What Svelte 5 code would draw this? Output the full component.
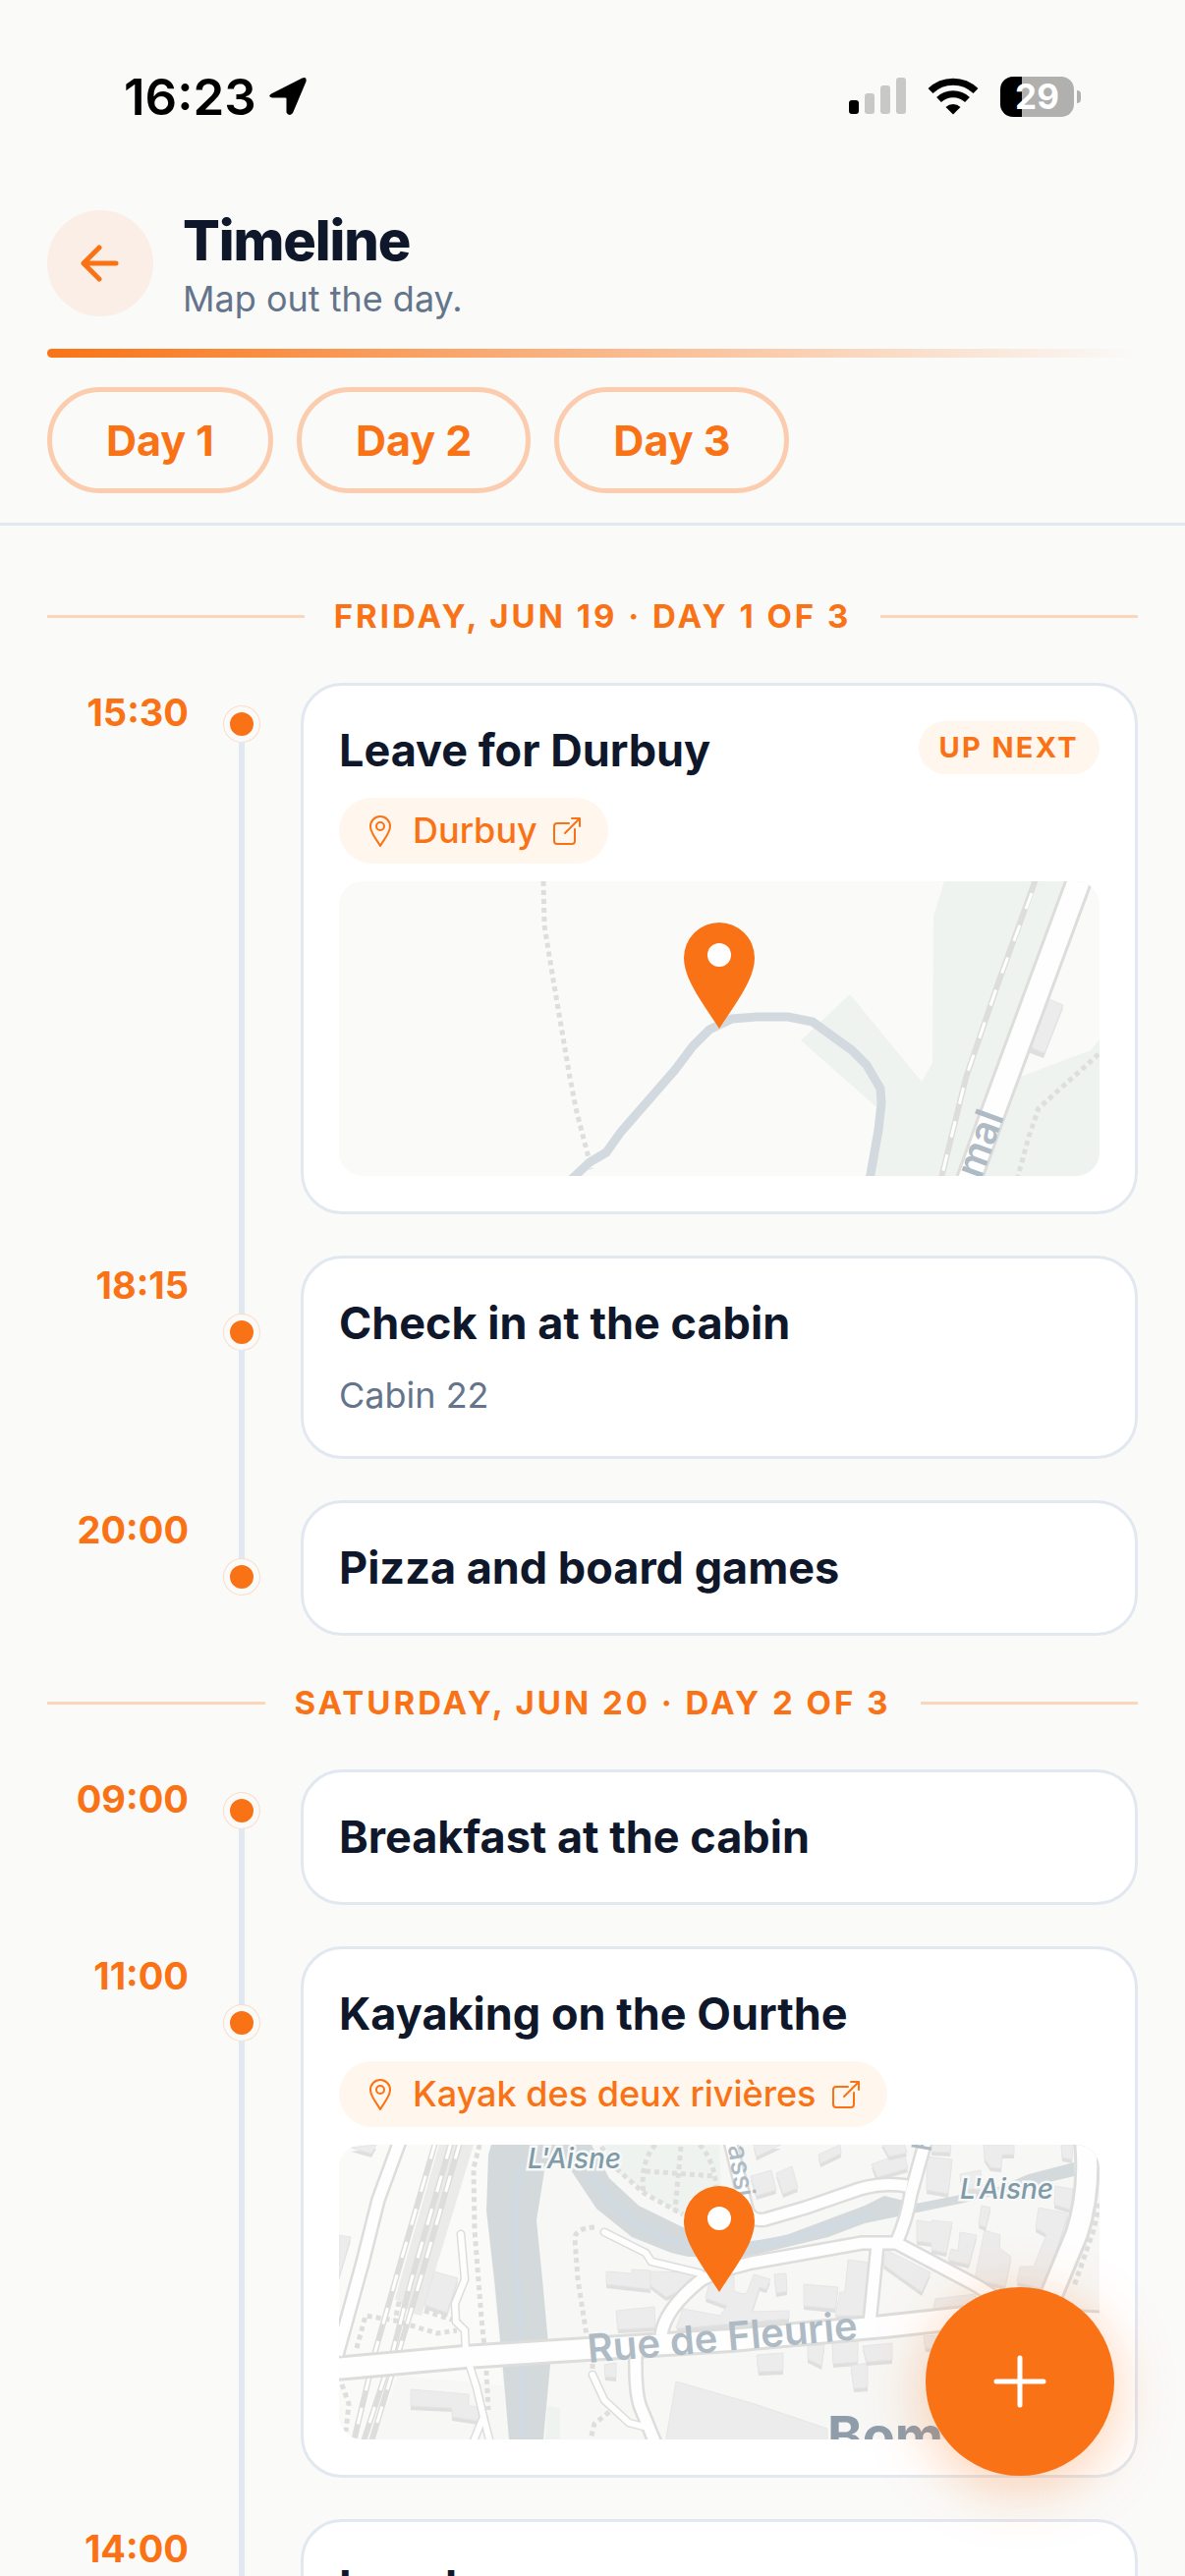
<script lang="ts">
  interface Stop {
    time: string
    title: string
    note?: string
    badge?: string
    place?: string
    map?: 'durbuy' | 'bomal'
  }

  interface Day {
    label: string
    stops: Stop[]
  }

  const days: Day[] = [
    {
      label: 'Friday, Jun 19 · Day 1 of 3',
      stops: [
        { time: '15:30', title: 'Leave for Durbuy', badge: 'Up next', place: 'Durbuy', map: 'durbuy' },
        { time: '18:15', title: 'Check in at the cabin', note: 'Cabin 22' },
        { time: '20:00', title: 'Pizza and board games' },
      ],
    },
    {
      label: 'Saturday, Jun 20 · Day 2 of 3',
      stops: [
        { time: '09:00', title: 'Breakfast at the cabin' },
        { time: '11:00', title: 'Kayaking on the Ourthe', place: 'Kayak des deux rivières', map: 'bomal' },
        { time: '14:00', title: 'Lunch' },
      ],
    },
  ]

  const buildings = [
    '12,3 38,0 33,9',
    '0,92 12,94 0,134',
    '97,129 121,136 110,171 87,163',
    '73,249 132,254 132,266 147,267 142,281 115,277 115,268 73,266',
    '272,129 298,131 298,127 317,128 317,147 272,142',
    '317,129 358,130 358,144 333,155 317,143',
    '282,169 321,165 322,186 284,188',
    '350,167 388,174 395,164 373,156 377,140 402,134 402,149 410,152 415,151 422,132 439,137 435,147 428,145 420,170 458,169 458,177 343,187',
    '443,132 455,131 456,149 445,151',
    '473,142 508,145 505,167 473,164',
    '518,117 540,120 535,174 505,174 510,150 515,150',
    '422,0 450,0 425,12',
    '488,10 510,0 511,9 490,19',
    '419,32 440,26 445,46 425,52',
    '445,29 461,22 467,44 452,50',
    '543,22 558,15 560,32 548,36',
    '425,214 452,212 452,230 427,231',
    '477,205 494,204 491,225 477,218',
    '502,202 528,200 528,221 503,223',
    '521,225 538,222 538,247 524,248',
    '533,205 563,202 563,219 537,221',
    '270,224 282,222 282,237 271,236',
    '343,241 423,264 497,289 497,310 331,310',
    '598,12 624,15 620,50 598,46',
    '603,0 623,0 622,8 603,7',
    '632,30 653,26 655,45 634,45',
    '656,0 687,0 687,10 675,10 674,24 663,23 657,14',
    '735,0 747,0 746,15 736,13',
    '729,42 747,45 745,66 728,61',
    '712,64 742,70 718,147 690,140 693,124 707,124 720,91 709,85',
    '588,77 603,79 603,77 624,79 618,110 603,107 603,100 588,98',
    '632,89 649,92 641,122 620,117 623,106 630,108',
    '657,87 673,92 672,105 684,114 678,144 647,137',
    '654,62 663,64 658,84 651,81',
    '542,20 575,8 579,24 548,33',
    '552,-2 575,-2 578,8 560,12',
    '557,107 602,130 593,150 554,122',
    '607,157 648,152 648,165 605,167',
    '595,195 615,194 615,207 597,207',
  ]

  const main_roads = [
    'M62 -4 L40 56 L24 120 L-2 214',
    'M398 -4 L415 66 Q420 79 434 76 L475 64 L530 45 Q555 38 578 42',
    'M597 -4 L582 50 Q578 76 567 100',
    'M328 194 Q331 168 368 138 Q385 128 420 120 L532 100 H567 L650 144 L700 176',
    'M548 102 L540 182',
    'M302 212 Q301 256 308 270 L322 304',
  ]

  const wide_roads = [
    'M-4 228 L128 216 L253 208 L398 199 L555 185 L655 174 L780 182',
    'M760 -4 Q765 46 751 90 L722 160',
  ]

  const lanes = [
    'M124 91 L128 137 L118 162 L119 180 L128 189 L129 212',
    'M132 222 L140 247 L147 277 L136 304',
    'M147 277 L154 304',
    'M270 89 L312 110 L318 119 L368 131',
    'M258 234 L270 260 L295 283 L310 287',
  ]

  const paths = [
    'M143 0 L137 24 L138 87 L145 177 L148 206',
    'M150 230 L152 270',
    'M18 207 L27 174 L57 179 L100 192 L120 189',
    'M87 169 L115 178',
    'M61 160 L57 179',
    'M3 244 L10 264 L7 292',
    'M260 84 Q240 85 240 96 L243 137 L252 194',
    'M258 228 V214',
    'M275 272 L260 284 L256 300',
    'M267 2 L282 24 L310 49 L350 71',
    'M322 0 Q306 18 310 49',
    'M367 0 Q382 16 384 44',
    'M348 2 L342 66',
    'M312 27 L383 32',
    'M774 60 L768 87 L748 144',
  ]

  const rails = [
    'M98 -2 L60 129 L37 210 L15 302',
    'M114 -2 L73 140 L55 210 L25 302',
    'M123 -2 L82 140 L61 210 L33 302',
  ]
</script>

{#snippet marker()}
  <path
    class="marker"
    d="M387 150 C371 125 351 100 351 78 A36 36 0 1 1 423 78 C423 100 403 125 387 150 Z"
  />
  <circle class="marker_hole" cx="387" cy="75" r="12" />
{/snippet}

{#snippet durbuy_map()}
  <svg class="map" viewBox="0 0 774 300" preserveAspectRatio="xMidYMid slice" role="img" aria-label="Map of Durbuy">
    <rect class="land" width="774" height="300" />
    <path
      class="green"
      d="M616 0 L605 36 L604 185 L593 204 L520 115 L470 162 L547 230 L541 300 H774 V161 L765 172 L693 199 L745 60 V0 Z"
    />
    <path class="path" d="M208 0 L209 45 L218 100 L235 200 L242 235 L257 293" />
    <path class="path" d="M773 176 L712 231 L702 260 L691 300" />
    <path
      class="stream"
      d="M236 304 L255 286 L272 276 L287 255 L342 192 L360 168 L377 151 L400 140 L425 138 H457 L482 143 L522 172 L537 187 L551 211 L552 226 L549 253 L540 304"
    />
    <path class="building_side" d="M723 123 L737 129 L717 180 L701 174 Z" />
    <path class="building" d="M723 120 L737 126 L718 175 L704 169 Z" />
    <path class="rail" d="M709 -2 L670 106 L638 200 L613 302" />
    <path class="rail_gap" d="M705 12 L670 106 L638 200 L613 302" />
    <path class="road_edge highway" d="M755 -6 L664 240 L641 304" />
    <path class="road_fill highway" d="M755 -6 L664 240 L641 304" />
    <text class="street" text-anchor="end" transform="translate(677 239) rotate(-70)">Bomal</text>
    {@render marker()}
  </svg>
{/snippet}

{#snippet bomal_map()}
  <svg class="map" viewBox="0 0 774 300" preserveAspectRatio="xMidYMid slice" role="img" aria-label="Map of Bomal">
    <rect class="town" width="774" height="300" />
    <path class="land" d="M0 0 H155 L150 67 L167 245 L60 235 L36 300 H0 Z" />
    <path class="yard" d="M102 0 H137 L84 174 L75 172 L57 157 Z" />
    <path class="green" d="M270 0 H387 L389 50 L348 71 L322 55 L282 27 Z" />
    <path class="green" d="M212 266 L225 268 V300 H210 Z" />
    <path
      class="water"
      d="M155 0 L152 10 L150 67 L158 137 L167 230 L173 300 H208 L215 224 L207 137 L201 77 L209 27 L215 17 L232 20 L262 65 L298 94 L338 110 L355 114 H415 L498 94 L535 80 L632 60 L748 32 V18 L702 30 L668 44 L587 60 L555 52 L535 62 L455 92 L415 100 L352 85 L305 62 L275 34 L257 0 Z"
    />
    <path class="current" d="M186 20 Q172 70 184 170 L188 300 M258 30 Q290 90 360 102 Q430 112 540 70" />
    {#each buildings as points}
      <polygon class="building_side" {points} transform="translate(0 4)" />
      <polygon class="building" {points} />
    {/each}
    {#each paths as d}
      <path class="path" {d} />
    {/each}
    {#each rails as d}
      <path class="rail" {d} />
      <path class="rail_gap" {d} />
    {/each}
    {#each lanes as d}
      <path class="road_edge lane" {d} />
    {/each}
    {#each main_roads as d}
      <path class="road_edge" {d} />
    {/each}
    {#each wide_roads as d}
      <path class="road_edge broad" {d} />
    {/each}
    {#each lanes as d}
      <path class="road_fill lane" {d} />
    {/each}
    {#each main_roads as d}
      <path class="road_fill" {d} />
    {/each}
    {#each wide_roads as d}
      <path class="road_fill broad" {d} />
    {/each}
    <text class="river_name" x="192" y="24">L'Aisne</text>
    <text class="river_name" x="632" y="55">L'Aisne</text>
    <text class="street small" text-anchor="end" transform="translate(404 54) rotate(81)">Rue du Bassi</text>
    <text class="street small" transform="translate(602 8) rotate(-80)">F</text>
    <text class="street" transform="translate(254 222) rotate(-5)">Rue de Fleurie</text>
    <text class="town_name" x="497" y="315">Bomal</text>
    {@render marker()}
  </svg>
{/snippet}

<div class="app">
  <div class="status_bar">
    <div class="status_group clock">
      <span>16:23</span>
      <svg width="40" height="40" viewBox="0 0 40 40" aria-hidden="true">
        <path d="M3 17.500 L34.500 1.500 Q39.500 -0.500 38.500 5 L25 37 Q21 41 18.500 36.500 V22.500 Q18.500 21.500 17.500 21.500 L4 21.500 Q-1 20.500 3 17.500 Z" />
      </svg>
    </div>

    <div class="status_group">
      <svg width="58" height="38" viewBox="0 0 58 38" aria-hidden="true">
        <rect x="0" y="23" width="10" height="14" rx="3" />
        <g class="signal_off">
          <rect x="16" y="16" width="10" height="21" rx="3" />
          <rect x="32" y="8" width="10" height="29" rx="3" />
          <rect x="48" y="0" width="10" height="37" rx="3" />
        </g>
      </svg>
      <svg class="wifi" width="52" height="38" viewBox="0 0 52 38" aria-hidden="true">
        <path class="wifi_arc" d="M3 13.500 A33 33 0 0 1 49 13.500" />
        <path class="wifi_arc" d="M11.500 22.500 A21 21 0 0 1 40.500 22.500" />
        <path d="M26 37.500 L18.500 30 A11 11 0 0 1 33.500 30 Z" />
      </svg>
      <div class="battery">
        <span class="battery_level">29</span>
        <span class="battery_nub"></span>
      </div>
    </div>
  </div>

  <header class="header">
    <div class="heading">
      <button class="back" aria-label="Back">
        <svg width="40" height="40" viewBox="0 0 40 40" aria-hidden="true">
          <path d="M36 20 H4 M19 4 L3 20 L19 36" />
        </svg>
      </button>
      <div>
        <h1>Timeline</h1>
        <p>Map out the day.</p>
      </div>
    </div>

    <div class="accent" role="presentation"></div>

    <nav class="day_tabs" aria-label="Days">
      {#each [1, 2, 3] as day}
        <button class="day_tab">Day {day}</button>
      {/each}
    </nav>
  </header>

  <main class="timeline">
    {#each days as day}
      <section>
        <h2 class="day_label">{day.label}</h2>

        {#each day.stops as stop, index}
          <article class="stop">
            <time>{stop.time}</time>

            <div class="rail_column" class:first={index === 0} role="presentation">
              <span class="connector lead"></span>
              <span class="dot"></span>
              {#if index < day.stops.length - 1}
                <span class="connector"></span>
              {/if}
            </div>

            <div class="card">
              <div class="card_header">
                <h3>{stop.title}</h3>
                {#if stop.badge}
                  <span class="badge">{stop.badge}</span>
                {/if}
              </div>

              {#if stop.note}
                <p class="note">{stop.note}</p>
              {/if}

              {#if stop.place}
                <a class="place" href="#{stop.map}">
                  <svg width="36" height="36" viewBox="0 0 36 36" aria-hidden="true">
                    <path d="M18 33 C14 26 8 20 8 13 A10 10 0 0 1 28 13 C28 20 22 26 18 33 Z" />
                    <circle cx="18" cy="13" r="4" />
                  </svg>
                  <span>{stop.place}</span>
                  <svg width="30" height="30" viewBox="0 0 30 30" aria-hidden="true">
                    <path d="M17 7 H5 Q2 7 2 10 V25 Q2 28 5 28 H20 Q23 28 23 25 V13 M13 17 L28 2 M20 2 H28 V10" />
                  </svg>
                </a>
              {/if}

              {#if stop.map === 'durbuy'}
                {@render durbuy_map()}
              {:else if stop.map === 'bomal'}
                {@render bomal_map()}
              {/if}
            </div>
          </article>
        {/each}
      </section>
    {/each}
  </main>

  <button class="add" aria-label="Add stop">
    <svg width="54" height="54" viewBox="0 0 54 54" aria-hidden="true">
      <path d="M27 3 V51 M3 27 H51" />
    </svg>
  </button>
</div>

<style>
  :global(body) {
    background: #fafaf9;
  }

  .app {
    --orange: #f97316;
    --ink: #0f172a;
    --muted: #64748b;
    --line: #e2e8f0;
    --page: #fafaf9;
    --tint: #fff6ed;

    display: flex;
    position: relative;
    flex-direction: column;
    height: 100vh;
    overflow: hidden;
    background: var(--page);
    color: var(--ink);
    font-family: Inter, 'Liberation Sans', sans-serif;
  }

  h1,
  h2,
  h3,
  p {
    margin: 0;
  }

  button {
    border: 0;
    padding: 0;
    font: inherit;
    cursor: pointer;
  }

  .status_bar {
    display: flex;
    flex: none;
    align-items: center;
    justify-content: space-between;
    padding: 0 106px 0 126px;
    height: 196px;
    color: #000;
  }

  .status_group {
    display: flex;
    align-items: center;
    gap: 22px;
  }

  .clock {
    gap: 12px;
    font-size: 51px;
    font-weight: 600;
  }

  .signal_off {
    fill: #c8c8c7;
  }

  .wifi_arc {
    fill: none;
    stroke: #000;
    stroke-width: 7;
  }

  .battery {
    display: flex;
    align-items: center;
    gap: 3px;
  }

  .battery_level {
    border-radius: 13px;
    width: 75px;
    background: linear-gradient(90deg, #000 29%, #b0b0af 29%);
    color: #fff;
    font-size: 35px;
    font-weight: 700;
    line-height: 41px;
    text-align: center;
  }

  .battery_nub {
    border-radius: 0 6px 6px 0;
    width: 4px;
    height: 13px;
    background: #b0b0af;
  }

  .header {
    flex: none;
    border-bottom: 3px solid var(--line);
    padding: 18px 48px 30px;
  }

  .heading {
    display: flex;
    align-items: flex-start;
    gap: 30px;
  }

  .back {
    display: grid;
    flex: none;
    place-items: center;
    border-radius: 50%;
    width: 108px;
    height: 108px;
    background: #faeee6;
  }

  .back path,
  .add path {
    fill: none;
    stroke: var(--orange);
    stroke-width: 5;
    stroke-linecap: round;
    stroke-linejoin: round;
  }

  h1 {
    font-size: 56px;
    font-weight: 800;
    letter-spacing: -0.02em;
    line-height: 62px;
  }

  .heading p {
    margin-top: 4px;
    color: var(--muted);
    font-size: 36px;
    line-height: 48px;
  }

  .accent {
    margin-top: 27px;
    border-radius: 5px;
    height: 9px;
    background: linear-gradient(90deg, var(--orange), rgb(249 115 22 / 0));
  }

  .day_tabs {
    display: flex;
    gap: 24px;
    margin-top: 30px;
  }

  .day_tab {
    border: 5px solid #fbcdae;
    border-radius: 54px;
    padding: 0 55px;
    height: 108px;
    background: transparent;
    color: var(--orange);
    font-size: 43px;
    font-weight: 700;
  }

  .timeline {
    flex: 1;
    padding: 24px 48px 0;
    min-height: 0;
    overflow-y: auto;
    scrollbar-width: none;
  }

  .day_label {
    display: flex;
    align-items: center;
    gap: 30px;
    padding: 48px 0;
    color: var(--orange);
    font-size: 33px;
    font-weight: 700;
    letter-spacing: 3px;
    line-height: 40px;
    text-transform: uppercase;
    white-space: nowrap;
  }

  .day_label::before,
  .day_label::after {
    content: '';
    flex: 1;
    height: 3px;
    background: #fcd5bb;
  }

  .stop {
    display: grid;
    grid-template-columns: 144px 114px 1fr;
  }

  time {
    padding-top: 6px;
    color: var(--orange);
    font-size: 38px;
    font-weight: 700;
    line-height: 48px;
    text-align: right;
  }

  .rail_column {
    display: flex;
    flex-direction: column;
    align-items: center;
    padding-right: 6px;
  }

  .connector {
    flex: 1;
    width: 6px;
    background: var(--line);
  }

  .connector.lead {
    flex: none;
    height: 60px;
  }

  .first .connector.lead {
    height: 24px;
    background: transparent;
  }

  .dot {
    box-sizing: border-box;
    flex: none;
    border: 6px solid var(--page);
    border-radius: 50%;
    width: 36px;
    height: 36px;
    background: var(--orange);
    box-shadow: 0 0 0 1px #fbdcc8;
  }

  .card {
    display: flex;
    flex-direction: column;
    align-items: flex-start;
    gap: 18px;
    border: 3px solid var(--line);
    border-radius: 42px;
    padding: 36px;
    min-width: 0;
    background: #fff;
  }

  .stop:not(:last-child) .card {
    margin-bottom: 42px;
  }

  .card_header {
    display: flex;
    align-items: flex-start;
    justify-content: space-between;
    width: 100%;
  }

  h3 {
    font-size: 45px;
    font-weight: 700;
    line-height: 60px;
  }

  .badge {
    border-radius: 27px;
    padding: 0 21px;
    background: var(--tint);
    color: var(--orange);
    font-size: 29px;
    font-weight: 700;
    letter-spacing: 0.08em;
    line-height: 54px;
    text-transform: uppercase;
  }

  .note {
    color: var(--muted);
    font-size: 36px;
    line-height: 51px;
  }

  .place {
    display: flex;
    align-items: center;
    gap: 15px;
    border-radius: 34px;
    padding: 8px 27px 8px 24px;
    background: var(--tint);
    color: var(--orange);
    font-size: 36px;
    font-weight: 500;
    line-height: 51px;
    text-decoration: none;
  }

  .place path,
  .place circle {
    fill: none;
    stroke: var(--orange);
    stroke-width: 2;
    stroke-linecap: round;
    stroke-linejoin: round;
  }

  .map {
    display: block;
    border-radius: 24px;
    width: 100%;
    height: 300px;
  }

  .land {
    fill: #fafaf8;
  }

  .town {
    fill: #f7f7f5;
  }

  .yard {
    fill: #ebebea;
  }

  .green {
    fill: #eef3ef;
  }

  .water {
    fill: #d4dadc;
  }

  .current {
    fill: none;
    stroke: #d1dae0;
    stroke-width: 8;
  }

  .stream {
    fill: none;
    stroke: #d2dadf;
    stroke-width: 9;
  }

  .building {
    fill: #ececec;
    stroke: #e6e6e6;
    stroke-width: 1;
  }

  .building_side {
    fill: #dfdfdf;
  }

  .path {
    fill: none;
    stroke: #dedede;
    stroke-dasharray: 5 4;
    stroke-width: 5;
  }

  .rail {
    fill: none;
    stroke: #dddddc;
    stroke-width: 6;
  }

  .rail_gap {
    fill: none;
    stroke: #fff;
    stroke-dasharray: 17 18;
    stroke-width: 3;
  }

  .road_edge {
    fill: none;
    stroke: #dddddc;
    stroke-width: 16;
  }

  .road_fill {
    fill: none;
    stroke: #fefefe;
    stroke-width: 11;
  }

  .road_edge.broad {
    stroke-width: 26;
  }

  .road_fill.broad {
    stroke-width: 20;
  }

  .road_edge.highway {
    stroke-width: 28;
  }

  .road_fill.highway {
    stroke-width: 22;
  }

  .lane {
    stroke-linecap: round;
  }

  .road_edge.lane {
    stroke-width: 9;
  }

  .road_fill.lane {
    stroke-width: 6;
  }

  .street {
    fill: #aebbc5;
    font-size: 40px;
    font-weight: 600;
  }

  .street.small {
    font-size: 28px;
    font-weight: 500;
  }

  .river_name {
    fill: #7f9ba7;
    stroke: #f7f8f8;
    stroke-width: 5;
    paint-order: stroke;
    font-size: 28px;
    font-style: italic;
    font-weight: 500;
  }

  .town_name {
    fill: #8f9dab;
    font-size: 54px;
    font-weight: 700;
  }

  .marker {
    fill: var(--orange);
  }

  .marker_hole {
    fill: #fff;
  }

  .add {
    display: grid;
    position: absolute;
    right: 72px;
    bottom: 102px;
    place-items: center;
    border-radius: 50%;
    width: 192px;
    height: 192px;
    background: var(--orange);
    box-shadow: 0 12px 60px rgb(249 115 22 / 0.35);
  }

  .add path {
    stroke: #fff;
  }
</style>
